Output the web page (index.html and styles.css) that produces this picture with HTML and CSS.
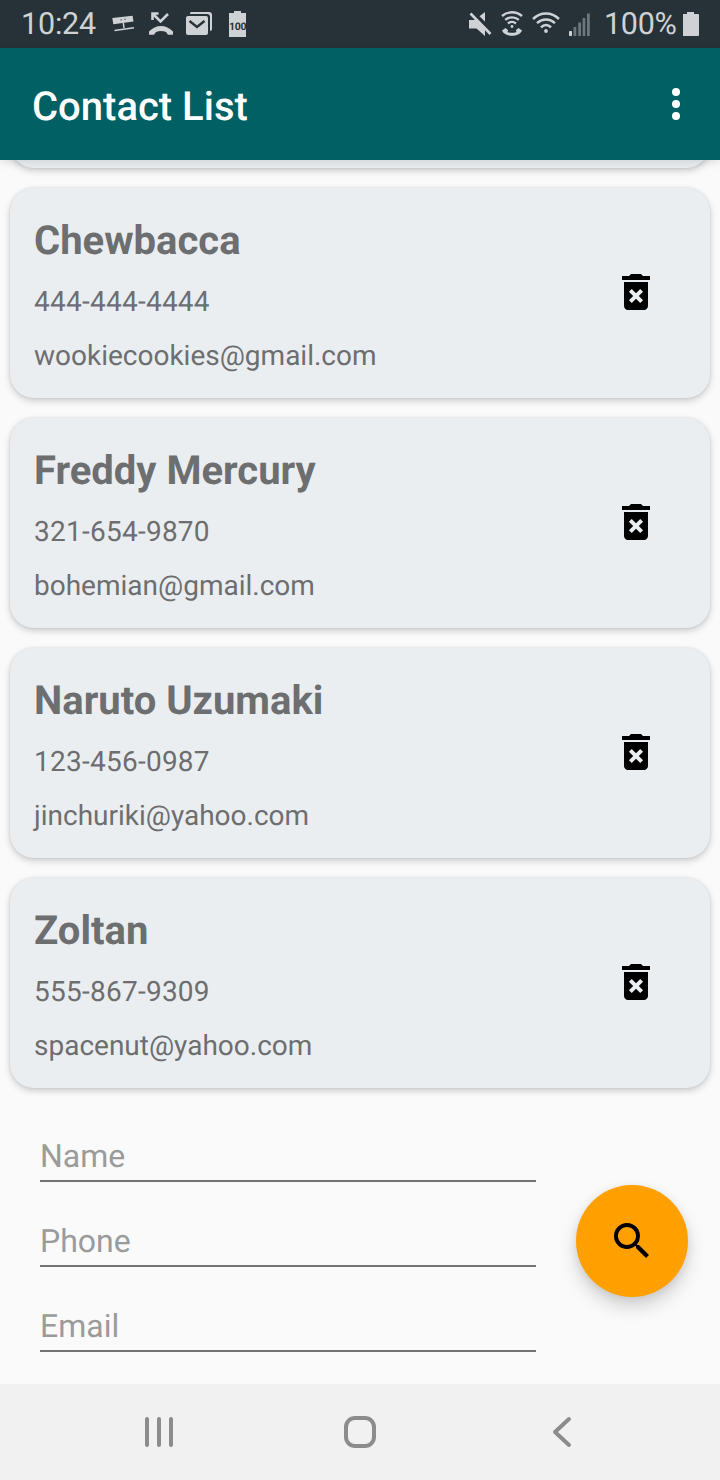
FILE: index.html
```html
<!DOCTYPE html>
<html lang="en">
<head>
<meta charset="utf-8">
<title>Contact List</title>
<link rel="stylesheet" href="styles.css">
</head>
<body>
<svg class="defs" width="0" height="0">
  <symbol id="trash" viewBox="0 0 24 24"><path fill-rule="evenodd" d="M6 19c0 1.100.9 2 2 2h8c1.100 0 2-.9 2-2V7H6v12zm2.460-7.120 1.410-1.410L12 12.590l2.120-2.120 1.410 1.410L13.410 14l2.120 2.120-1.410 1.410L12 15.410l-2.120 2.120-1.410-1.410L10.590 14l-2.130-2.120zM15.500 4l-1-1h-5l-1 1H5v2h14V4z"/></symbol>
</svg>
<div class="screen">
  <header class="status">
    <div class="status-left">
      <span class="clock">10:24</span>
      <svg class="camera" width="24" height="28" viewBox="0 0 24 28"><path d="M.3 8 20.600 5.700 21.500 11.500 1.300 14.300z"/><path d="m11.300 12.500.7 5.500M2.500 20.500l19.500-2.700" fill="none" stroke="#cfd2d4" stroke-width="1.500"/><path d="M8 10l2-.3M12 9.400l2-.3" stroke="#273238" stroke-width=".6"/></svg>
      <svg class="missed" width="26" height="28" viewBox="0 0 26 28"><path d="M1 21.500c6.500-7.500 17.500-7.500 24 0v3.300H20l-2-2.800c-3.200-1.400-6.800-1.400-10 0l-2 2.800H1z"/><path d="M5 4l7.500 7.500L20 4M4.500 10V3.500H10.500" fill="none" stroke="#cfd2d4" stroke-width="2.600"/></svg>
      <svg class="mail" width="28" height="28" viewBox="0 0 28 28"><path d="M6 2h18a3 3 0 0 1 3 3v14a2 2 0 0 1-2 2V7a3 3 0 0 0-3-3H5a2 2 0 0 1 1-2z"/><rect x="1" y="6" width="22" height="19" rx="2"/><path d="m4.500 11 7.500 6 7.500-6" fill="none" stroke="#273238" stroke-width="2.400"/></svg>
      <span class="battery-info"><svg width="18" height="28" viewBox="0 0 18 28"><path d="M0 3h5V1h7v2h5v24H0z"/></svg><span class="battery-num">100</span></span>
    </div>
    <div class="status-right">
      <svg class="mute" width="24" height="28" viewBox="0 0 24 28"><path d="M1 10h5.500L17 2v24L8.500 18.500H1z"/><path d="m3 .5 20 20" stroke="#273238" stroke-width="4"/><path d="m2.500 3.500 20 20.500" stroke="#cfd2d4" stroke-width="2.600"/></svg>
      <svg class="wificall" width="22" height="28" viewBox="0 0 22 28"><path d="M1 6c6-5 14-5 20 0M4.200 9.800c4-3.300 9.600-3.300 13.600 0M7 13.500c2.500-2 5.500-2 8 0" fill="none" stroke="#cfd2d4" stroke-width="2.300"/><circle cx="11" cy="16.500" r="1.400"/><path d="M1 20.500 4.500 18l2.700 2.300-.8 1.600c3 1.300 6.200 1.300 9.200 0l-.8-1.600 2.700-2.300L21 20.500C18.500 27.500 3.500 27.500 1 20.500z"/></svg>
      <svg class="wifi" width="28" height="28" viewBox="0 0 28 28"><path d="M1 9c7.500-7.300 18.500-7.300 26 0M5 13.200c5.500-5 12.500-5 18 0M9 17.300c3-3 7-3 10 0" fill="none" stroke="#cfd2d4" stroke-width="2.500"/><circle cx="14" cy="21" r="1.900"/></svg>
      <svg class="signal" width="24" height="28" viewBox="0 0 24 28"><rect x="1" y="21" width="3" height="5" rx=".7"/><path fill="#6d767b" d="M5.500 17h2.800v9H5.500zM10.200 12.500H13V26h-2.800zM14.600 8h2.700v18h-2.700zM19 3.500h2.800V26H19z"/></svg>
      <span class="percent">100%</span>
      <svg class="battery" width="17" height="28" viewBox="0 0 17 28"><path d="M1 4h4V2h7v2h4q1 0 1 1v20q0 1-1 1H1z"/></svg>
    </div>
  </header>
  <div class="appbar">
    <h1 class="title">Contact List</h1>
    <svg width="16" height="40" viewBox="0 0 16 40"><circle cx="8" cy="8" r="4"/><circle cx="8" cy="20" r="4"/><circle cx="8" cy="32" r="4"/></svg>
  </div>
  <main class="list">
    <div class="card card-cut"></div>
    <article class="card"><div class="info"><h2 class="name">Chewbacca</h2><p class="line phone">444-444-4444</p><p class="line">wookiecookies@gmail.com</p></div><svg class="trash" width="48" height="48"><use href="#trash"/></svg></article>
    <article class="card"><div class="info"><h2 class="name">Freddy Mercury</h2><p class="line phone">321-654-9870</p><p class="line">bohemian@gmail.com</p></div><svg class="trash" width="48" height="48"><use href="#trash"/></svg></article>
    <article class="card"><div class="info"><h2 class="name">Naruto Uzumaki</h2><p class="line phone">123-456-0987</p><p class="line">jinchuriki@yahoo.com</p></div><svg class="trash" width="48" height="48"><use href="#trash"/></svg></article>
    <article class="card"><div class="info"><h2 class="name">Zoltan</h2><p class="line phone">555-867-9309</p><p class="line">spacenut@yahoo.com</p></div><svg class="trash" width="48" height="48"><use href="#trash"/></svg></article>
  </main>
  <section class="form">
    <div class="fields">
      <div class="field">Name</div>
      <div class="field">Phone</div>
      <div class="field">Email</div>
    </div>
    <div class="fab"><svg width="48" height="48" viewBox="0 0 24 24"><path d="M15.500 14h-.79l-.28-.27A6.471 6.471 0 0 0 16 9.500 6.500 6.500 0 1 0 9.500 16c1.610 0 3.090-.59 4.230-1.570l.27.28v.79l5 4.990L20.490 19l-4.990-5zm-6 0C7.010 14 5 11.990 5 9.500S7.010 5 9.500 5 14 7.010 14 9.500 11.990 14 9.500 14z"/></svg></div>
  </section>
  <nav class="nav">
    <svg width="32" height="34" viewBox="0 0 32 34"><path d="M4 4v26M16 4v26M28 4v26"/></svg>
    <svg class="home" width="34" height="34" viewBox="0 0 34 34"><rect x="3" y="3" width="28" height="28" rx="9"/></svg>
    <svg width="22" height="34" viewBox="0 0 22 34"><path d="M18 4 4 17l14 13"/></svg>
  </nav>
</div>
</body>
</html>
```
FILE: styles.css
```css
body { margin: 0; font-family: Roboto, "Liberation Sans", sans-serif; background: #fafafa; text-rendering: geometricPrecision; }
h1, h2, p { margin: 0; }
.defs { display: block; }
.screen { width: 720px; height: 1480px; display: flex; flex-direction: column; overflow: hidden; }

.status { height: 48px; flex: none; display: flex; justify-content: space-between; background: #273238; color: #cfd2d4; fill: #cfd2d4; font-size: 30.500px; line-height: 48px; }
.status svg { display: block; }
.status-left, .status-right { display: flex; align-items: center; }
.status-left { padding-left: 21px; }
.status-right { padding-right: 21px; }
.clock { width: 91px; letter-spacing: -0.2px; padding-top: 2px; box-sizing: border-box; }
.missed { margin-left: 12px; }
.mail { margin-left: 11px; }
.battery-info { display: grid; align-items: center; margin-left: 16px; width: 18px; }
.battery-info > * { grid-area: 1 / 1; }
.battery-num { color: #273238; font-size: 10.500px; font-weight: 700; line-height: 28px; padding-top: 3px; height: 25px; text-align: center; width: 17px; letter-spacing: -0.3px; }
.wificall { margin-left: 9px; }
.wifi { margin-left: 9px; }
.signal { margin-left: 8px; }
.percent { margin-left: 12px; padding-top: 2px; width: 78px; letter-spacing: -0.3px; }

.appbar { height: 112px; flex: none; box-sizing: border-box; padding: 0 36px 0 32px; display: flex; align-items: center; justify-content: space-between; background: #006064; color: #fff; fill: #fff; position: relative; z-index: 1; box-shadow: 0 2px 9px rgba(0, 0, 0, .12); }
.title { font-size: 40px; font-weight: 500; line-height: 48px; padding-top: 6px; }

.list { height: 937px; flex: none; box-sizing: border-box; padding: 0 10px; display: flex; flex-direction: column; gap: 20px; overflow: hidden; }
.card { height: 210px; flex: none; box-sizing: border-box; padding: 28px 50px 0 24px; display: flex; justify-content: space-between; border-radius: 24px; background: #ebeef1; color: #6d6e70; box-shadow: 0 3px 7px rgba(0, 0, 0, .18), 0 0 3px rgba(0, 0, 0, .1); }
.card-cut { height: 27px; margin-top: -20px; border-radius: 0 0 24px 24px; }
.name { font-size: 40px; line-height: 50px; font-weight: 700; }
.line { font-size: 28px; line-height: 34px; margin-top: 19px; }
.line + .line { margin-top: 20px; }
.phone { letter-spacing: 0.250px; }
.trash { margin-top: 52px; fill: #000; }

.form { height: 287px; flex: none; box-sizing: border-box; padding: 33px 32px 0 40px; display: flex; justify-content: space-between; }
.fields { width: 496px; display: flex; flex-direction: column; gap: 33px; }
.field { height: 52px; box-sizing: border-box; border-bottom: 2px solid #737373; font-size: 32px; line-height: 52px; color: #9b9b9b; }
.fab { width: 112px; height: 112px; margin-top: 55px; border-radius: 50%; background: #ffa000; display: flex; align-items: center; justify-content: center; box-shadow: 0 10px 18px rgba(0, 0, 0, .16), 0 2px 8px rgba(0, 0, 0, .08); }

.nav { height: 96px; flex: none; box-sizing: border-box; padding: 0 147px 0 143px; display: flex; align-items: center; justify-content: space-between; background: #f1f1f1; }
.nav svg { fill: none; stroke: #8c8c8c; stroke-width: 4; stroke-linecap: round; stroke-linejoin: round; }
.nav .home { margin-right: 6px; }
```
